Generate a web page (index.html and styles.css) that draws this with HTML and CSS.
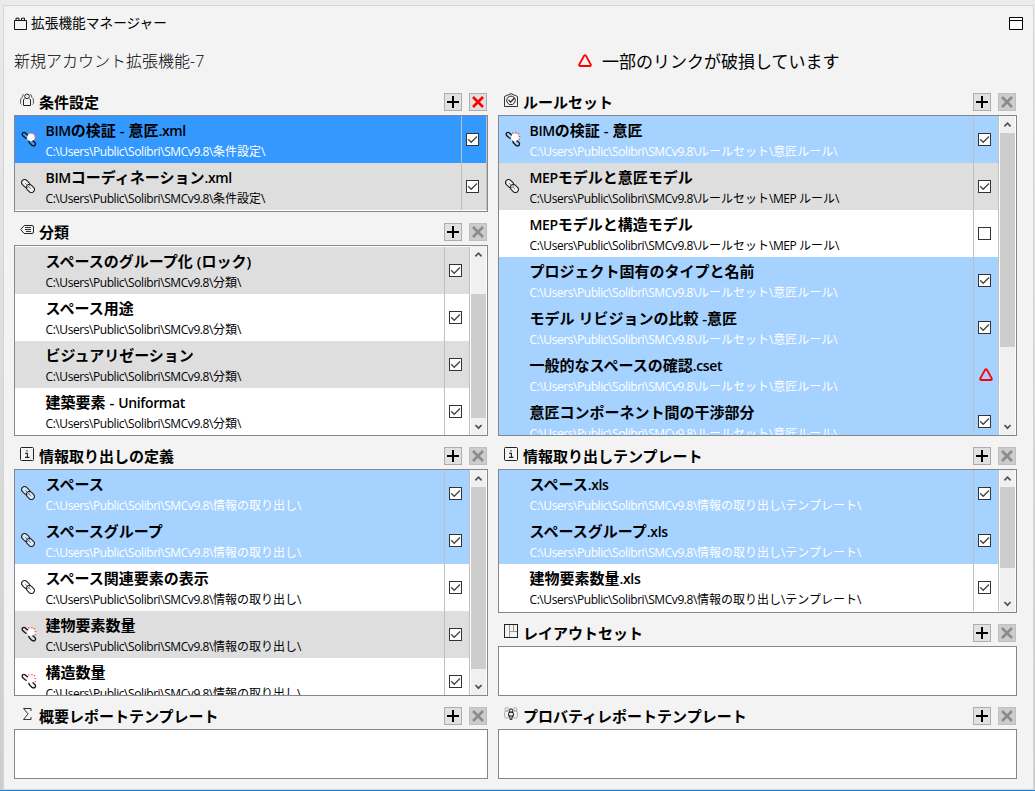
FILE: index.html
```html
<!DOCTYPE html>
<html lang="ja">
<head>
    <meta charset="UTF-8">
    <meta name="viewport" content="width=device-width, initial-scale=1.0">
    <title>拡張機能マネージャー</title>
    <link rel="stylesheet" href="styles.css">
</head>
<body>
    <!-- Shared icons -->
    <svg class="icon-defs" aria-hidden="true">
        <symbol id="plus" viewBox="0 0 16 16"><path d="M8 2v12M2 8h12" stroke="#000" stroke-width="2"/></symbol>
        <symbol id="cross" viewBox="0 0 16 16"><path d="M3 3l10 10M13 3L3 13" stroke="currentColor" stroke-width="2.6"/></symbol>
        <symbol id="check" viewBox="0 0 13 13"><rect x=".5" y=".5" width="12" height="12" fill="#fff" stroke="#333"/><path d="M2.2 6.3l3 3 5.8-5.8" fill="none" stroke="#444" stroke-width="1.3"/></symbol>
        <symbol id="box" viewBox="0 0 13 13"><rect x=".5" y=".5" width="12" height="12" fill="#fff" stroke="#333"/></symbol>
        <symbol id="warning" viewBox="0 0 14 13"><path d="M6.2 1.6Q7 .6 7.8 1.6L12.8 10.6Q13.2 12 12 12H2Q.8 12 1.2 10.6z" fill="none" stroke="#f00" stroke-width="1.8"/></symbol>
        <symbol id="link" viewBox="0 0 14 14">
            <g fill="none" stroke="#222" stroke-width="1.1" transform="rotate(45 7 7)">
                <rect x="-.8" y="4" width="8.8" height="6" rx="3" fill="#fff" fill-opacity=".5"/>
                <rect x="6" y="4" width="8.8" height="6" rx="3" fill="#fff" fill-opacity=".5"/>
                <path d="M3 7h3M8 7h3" stroke="#666" stroke-width=".8"/>
            </g>
        </symbol>
        <symbol id="broken" viewBox="0 0 16 16">
            <circle cx="10" cy="6.4" r="3.8" fill="#fff"/>
            <path d="M7.8 1v1.8M11 .8v1.8M14 2.2l-1.2 1.2M15.4 5.5h-1.8M15 9l-1.4-.8" stroke="#ff5a5a" stroke-width="1.1"/>
            <g fill="none" stroke="#111" stroke-width="1.3">
                <path d="M5.8 7.4L4.4 7 1.6 4.6Q.6 2.8 1.8 1.8 3.2.9 4.4 2L6.8 4.2"/>
                <path d="M8 9.8Q7.6 11 8.6 12l2.4 2.4q1.6 1 2.8.2 1.2-1.2.4-2.8L11.6 9.4"/>
            </g>
        </symbol>
        <symbol id="info" viewBox="0 0 14 14"><rect x=".5" y=".5" width="13" height="13" rx="1" fill="none" stroke="#222"/><path d="M7 3v1.4M5.2 6.4H7.4V10M5 10.4h4.4" fill="none" stroke="#222" stroke-width="1.1"/></symbol>
        <symbol id="up" viewBox="0 0 17 17"><path d="M5 10.6l3.5-3.6 3.5 3.6" fill="none" stroke="#505050" stroke-width="1.9"/></symbol>
        <symbol id="down" viewBox="0 0 17 17"><path d="M5 6.8l3.5 3.6L12 6.8" fill="none" stroke="#505050" stroke-width="1.9"/></symbol>
    </svg>

    <div class="window">
        <div class="titlebar">
            <svg class="title-icon" viewBox="0 0 13 13"><path d="M.5 3.5h12v9H.5zM2 3.5V1.2h3v2.3M7.5 3.5V1.2h3v2.3" fill="none" stroke="#111"/></svg>
            <span class="window-title">拡張機能マネージャー</span>
            <svg class="maximize" viewBox="0 0 14 13"><path d="M.5.5h13v12H.5z" fill="#fff" stroke="#000"/><path d="M0 3.5h14" stroke="#000"/></svg>
        </div>
        <div class="summary">
            <span class="account">新規アカウント拡張機能-7</span>
            <span class="alert"><svg class="warning"><use href="#warning"/></svg>一部のリンクが破損しています</span>
        </div>

        <div class="columns">
            <div class="column left">
                <div class="header first">
                    <svg class="header-icon" viewBox="0 0 14 14"><g fill="none" stroke="#222"><circle cx="7" cy="3.3" r="2.3"/><path d="M4.5 5.5L3.5 7v5.5h7V7l-1-1.5"/><path d="M4 1.5Q2 1.6 2.2 4.4L.6 6v4.5l1 1M10 1.5q2 .1 1.8 2.9L13.4 6v4.5l-1 1" stroke="#555"/></g></svg>
                    <h2>条件設定</h2>
                    <button class="tool"><svg><use href="#plus"/></svg></button>
                    <button class="tool remove"><svg><use href="#cross"/></svg></button>
                </div>
                <div class="list roles">
                    <div class="rows">
                        <div class="row selected"><svg class="broken"><use href="#broken"/></svg><div class="text"><b><i>BIM</i>の検証 - 意匠<i>.xml</i></b><p><i>C:\Users\Public\Solibri\SMCv9.8\</i>条件設定\</p></div><div class="state"><svg><use href="#check"/></svg></div></div>
                        <div class="row gray"><svg class="link"><use href="#link"/></svg><div class="text"><b><i>BIM</i>コーディネーション<i>.xml</i></b><p><i>C:\Users\Public\Solibri\SMCv9.8\</i>条件設定\</p></div><div class="state"><svg><use href="#check"/></svg></div></div>
                    </div>
                </div>

                <div class="header">
                    <svg class="header-icon" viewBox="0 0 14 14"><path d="M4.2 2.5H12q1.5 0 1.5 1.5v5q0 1.5-1.5 1.5H4.2L.7 6.5z" fill="none" stroke="#222"/><path d="M5 4.5h6M5 6.5h6M6 8.5h5" stroke="#333"/></svg>
                    <h2>分類</h2>
                    <button class="tool"><svg><use href="#plus"/></svg></button>
                    <button class="tool disabled"><svg><use href="#cross"/></svg></button>
                </div>
                <div class="list classes">
                    <div class="rows">
                        <div class="row gray"><div class="text"><b>スペースのグループ化 (ロック)</b><p><i>C:\Users\Public\Solibri\SMCv9.8\</i>分類\</p></div><div class="state"><svg><use href="#check"/></svg></div></div>
                        <div class="row"><div class="text"><b>スペース用途</b><p><i>C:\Users\Public\Solibri\SMCv9.8\</i>分類\</p></div><div class="state"><svg><use href="#check"/></svg></div></div>
                        <div class="row gray"><div class="text"><b>ビジュアリゼーション</b><p><i>C:\Users\Public\Solibri\SMCv9.8\</i>分類\</p></div><div class="state"><svg><use href="#check"/></svg></div></div>
                        <div class="row"><div class="text"><b>建築要素 - <i>Uniformat</i></b><p><i>C:\Users\Public\Solibri\SMCv9.8\</i>分類\</p></div><div class="state"><svg><use href="#check"/></svg></div></div>
                    </div>
                    <div class="scrollbar"><svg><use href="#up"/></svg><div class="thumb"></div><svg><use href="#down"/></svg></div>
                </div>

                <div class="header">
                    <svg class="header-icon"><use href="#info"/></svg>
                    <h2>情報取り出しの定義</h2>
                    <button class="tool"><svg><use href="#plus"/></svg></button>
                    <button class="tool disabled"><svg><use href="#cross"/></svg></button>
                </div>
                <div class="list definitions">
                    <div class="rows">
                        <div class="row light"><svg class="link"><use href="#link"/></svg><div class="text"><b>スペース</b><p><i>C:\Users\Public\Solibri\SMCv9.8\</i>情報の取り出し\</p></div><div class="state"><svg><use href="#check"/></svg></div></div>
                        <div class="row light"><svg class="link"><use href="#link"/></svg><div class="text"><b>スペースグループ</b><p><i>C:\Users\Public\Solibri\SMCv9.8\</i>情報の取り出し\</p></div><div class="state"><svg><use href="#check"/></svg></div></div>
                        <div class="row"><svg class="link"><use href="#link"/></svg><div class="text"><b>スペース関連要素の表示</b><p><i>C:\Users\Public\Solibri\SMCv9.8\</i>情報の取り出し\</p></div><div class="state"><svg><use href="#check"/></svg></div></div>
                        <div class="row gray"><svg class="broken"><use href="#broken"/></svg><div class="text"><b>建物要素数量</b><p><i>C:\Users\Public\Solibri\SMCv9.8\</i>情報の取り出し\</p></div><div class="state"><svg><use href="#check"/></svg></div></div>
                        <div class="row"><svg class="broken"><use href="#broken"/></svg><div class="text"><b>構造数量</b><p><i>C:\Users\Public\Solibri\SMCv9.8\</i>情報の取り出し\</p></div><div class="state"><svg><use href="#check"/></svg></div></div>
                    </div>
                    <div class="scrollbar"><svg><use href="#up"/></svg><div class="thumb"></div><svg><use href="#down"/></svg></div>
                </div>

                <div class="header">
                    <svg class="header-icon" viewBox="0 0 14 14"><path d="M11 4V1.5H3.5L8 6.8l-4.5 5.7H11V10" fill="none" stroke="#333"/></svg>
                    <h2>概要レポートテンプレート</h2>
                    <button class="tool"><svg><use href="#plus"/></svg></button>
                    <button class="tool disabled"><svg><use href="#cross"/></svg></button>
                </div>
                <div class="list empty"></div>
            </div>

            <div class="column right">
                <div class="header first">
                    <svg class="header-icon" viewBox="0 0 14 14"><path d="M.5 13.5v-10L7 .6l6.5 2.9v10z" fill="none" stroke="#333"/><circle cx="7" cy="7.4" r="4.3" fill="none" stroke="#222"/><path d="M4.6 7l2 2.2L10.4 5" fill="none" stroke="#222" stroke-width="1.2"/></svg>
                    <h2>ルールセット</h2>
                    <button class="tool"><svg><use href="#plus"/></svg></button>
                    <button class="tool disabled"><svg><use href="#cross"/></svg></button>
                </div>
                <div class="list rulesets">
                    <div class="rows">
                        <div class="row light"><svg class="broken"><use href="#broken"/></svg><div class="text"><b><i>BIM</i>の検証 - 意匠</b><p><i>C:\Users\Public\Solibri\SMCv9.8\</i>ルールセット\意匠ルール\</p></div><div class="state"><svg><use href="#check"/></svg></div></div>
                        <div class="row gray"><svg class="link"><use href="#link"/></svg><div class="text"><b><i>MEP</i>モデルと意匠モデル</b><p><i>C:\Users\Public\Solibri\SMCv9.8\</i>ルールセット<i>\MEP </i>ルール\</p></div><div class="state"><svg><use href="#check"/></svg></div></div>
                        <div class="row"><div class="text"><b><i>MEP</i>モデルと構造モデル</b><p><i>C:\Users\Public\Solibri\SMCv9.8\</i>ルールセット<i>\MEP </i>ルール\</p></div><div class="state"><svg><use href="#box"/></svg></div></div>
                        <div class="row light"><div class="text"><b>プロジェクト固有のタイプと名前</b><p><i>C:\Users\Public\Solibri\SMCv9.8\</i>ルールセット\意匠ルール\</p></div><div class="state"><svg><use href="#check"/></svg></div></div>
                        <div class="row light"><div class="text"><b>モデル リビジョンの比較 -意匠</b><p><i>C:\Users\Public\Solibri\SMCv9.8\</i>ルールセット\意匠ルール\</p></div><div class="state"><svg><use href="#check"/></svg></div></div>
                        <div class="row light"><div class="text"><b>一般的なスペースの確認<i>.cset</i></b><p><i>C:\Users\Public\Solibri\SMCv9.8\</i>ルールセット\意匠ルール\</p></div><div class="state"><svg class="warning"><use href="#warning"/></svg></div></div>
                        <div class="row light"><div class="text"><b>意匠コンポーネント間の干渉部分</b><p><i>C:\Users\Public\Solibri\SMCv9.8\</i>ルールセット\意匠ルール\</p></div><div class="state"><svg><use href="#check"/></svg></div></div>
                    </div>
                    <div class="scrollbar"><svg><use href="#up"/></svg><div class="thumb"></div><svg><use href="#down"/></svg></div>
                </div>

                <div class="header">
                    <svg class="header-icon"><use href="#info"/></svg>
                    <h2>情報取り出しテンプレート</h2>
                    <button class="tool"><svg><use href="#plus"/></svg></button>
                    <button class="tool disabled"><svg><use href="#cross"/></svg></button>
                </div>
                <div class="list templates">
                    <div class="rows">
                        <div class="row light"><div class="text"><b>スペース<i>.xls</i></b><p><i>C:\Users\Public\Solibri\SMCv9.8\</i>情報の取り出し\テンプレート\</p></div><div class="state"><svg><use href="#check"/></svg></div></div>
                        <div class="row light"><div class="text"><b>スペースグループ<i>.xls</i></b><p><i>C:\Users\Public\Solibri\SMCv9.8\</i>情報の取り出し\テンプレート\</p></div><div class="state"><svg><use href="#check"/></svg></div></div>
                        <div class="row"><div class="text"><b>建物要素数量<i>.xls</i></b><p><i>C:\Users\Public\Solibri\SMCv9.8\</i>情報の取り出し\テンプレート\</p></div><div class="state"><svg><use href="#check"/></svg></div></div>
                    </div>
                    <div class="scrollbar"><svg><use href="#up"/></svg><div class="thumb"></div><svg><use href="#down"/></svg></div>
                </div>

                <div class="header">
                    <svg class="header-icon" viewBox="0 0 14 14"><path d="M5.5 1v12M9.5 1v6M5.5 7.5H13" fill="none" stroke="#999"/><rect x=".5" y=".5" width="13" height="13" fill="none" stroke="#222"/></svg>
                    <h2>レイアウトセット</h2>
                    <button class="tool"><svg><use href="#plus"/></svg></button>
                    <button class="tool disabled"><svg><use href="#cross"/></svg></button>
                </div>
                <div class="list empty"></div>

                <div class="header">
                    <svg class="header-icon" viewBox="0 0 14 14"><g fill="none" stroke="#aaa"><circle cx="2.6" cy="2.2" r="1.7"/><circle cx="11.4" cy="2.2" r="1.7"/><rect x=".6" y="4" width="4" height="7" rx="1.5"/><rect x="9.4" y="4" width="4" height="7" rx="1.5"/></g><g fill="#f3f3f3" stroke="#111"><circle cx="7" cy="3.6" r="1.7"/><rect x="4.6" y="5.3" width="4.8" height="4.4" rx="1.5"/><path d="M6 8v4.3h2V8"/></g></svg>
                    <h2>プロバティレポートテンプレート</h2>
                    <button class="tool"><svg><use href="#plus"/></svg></button>
                    <button class="tool disabled"><svg><use href="#cross"/></svg></button>
                </div>
                <div class="list empty"></div>
            </div>
        </div>
    </div>
</body>
</html>
```
FILE: styles.css
```css
* {
    box-sizing: border-box;
}

body {
    font-family: "Open Sans", "Noto Sans CJK JP", sans-serif;
    margin: 0;
    height: 791px;
    padding: 5px 1px 0 3px;
    overflow: hidden;
    color: #000;
    background: linear-gradient(#ebebeb, #cdcdcd);
    border-bottom: 1px solid #1883d7;
}

.icon-defs {
    display: none;
}

svg {
    display: block;
    flex: none;
}

.window {
    height: 785px;
    padding: 0 16px 0 10px;
    background-color: #f3f3f3;
    border: 1px solid #d5d5d5;
}

.titlebar {
    display: flex;
    align-items: center;
    height: 34px;
}

.title-icon {
    width: 13px;
    height: 13px;
}

.window-title {
    flex: 1;
    margin-left: 4px;
    padding-bottom: 2px;
    font-size: 13.7px;
}

.maximize {
    width: 14px;
    height: 13px;
    margin-right: -6px;
}

.summary {
    display: flex;
    align-items: center;
    height: 42px;
    padding-bottom: 2px;
    font-size: 16px;
}

.account {
    width: 564px;
    font-weight: 300;
}

.alert {
    display: flex;
    align-items: center;
    gap: 10px;
    font-size: 17px;
}

.warning {
    width: 14px;
    height: 13px;
}

.columns {
    display: flex;
    gap: 10px;
}

.left {
    width: 474px;
}

.right {
    width: 519px;
}

.header {
    display: flex;
    align-items: flex-end;
    height: 33px;
    padding: 0 1px 4px 6px;
}

.header-icon {
    width: 14px;
    height: 14px;
    margin-bottom: 4px;
}

h2 {
    flex: 1;
    margin: 0 0 0 5px;
    font-size: 15px;
    font-weight: 700;
    line-height: 18px;
}

.tool {
    display: flex;
    width: 18px;
    height: 18px;
    margin-left: 7px;
    padding: 0;
    background-color: #e1e1e1;
    border: 1px solid #adadad;
}

.tool svg {
    width: 16px;
    height: 16px;
}

.remove {
    color: #f00;
}

.disabled {
    color: #8b8b8b;
    background-color: #ccc;
    border-color: #bfbfbf;
}

.list {
    display: flex;
    overflow: hidden;
    background-color: #fff;
    border: 1px solid #828790;
}

.roles { height: 97px; }
.classes { height: 191px; }
.definitions { height: 227px; }
.rulesets { height: 321px; }
.templates { height: 144px; }
.empty { height: 50px; }

.classes .rows {
    padding-top: 1px;
}

.rows {
    flex: 1;
}

.row {
    display: flex;
    height: 47px;
    padding-left: 6px;
    background-color: #fff;
}

.gray {
    background-color: #dedede;
}

.light {
    background-color: #a6d2ff;
}

.selected {
    background-color: #39f;
}

.link {
    width: 14px;
    height: 14px;
    margin: 16px -14px 0 0;
}

.broken {
    width: 16px;
    height: 16px;
    margin: 15px -16px 0 0;
}

.text {
    flex: 1;
    padding-left: 24.5px;
    white-space: nowrap;
}

.text b {
    display: block;
    height: 27px;
    font-size: 15px;
    font-weight: 600;
    line-height: 28px;
}

.text p {
    margin: 0;
    font-size: 12px;
    line-height: 18px;
}

/* Latin parts run tighter than the Japanese text */
.text i {
    font-style: normal;
    letter-spacing: -0.43px;
}

.text b i {
    font-size: 14px;
    letter-spacing: -0.35px;
}

.selected p, .light p {
    color: #fff;
}

.state {
    width: 26px;
    padding: 17px 0 0 4px;
    border: solid #bfbfbf;
    border-width: 0 1px;
}

.state svg {
    width: 13px;
    height: 13px;
}

.state .warning {
    width: 14px;
    margin-left: 1px;
}

.scrollbar {
    display: flex;
    flex-direction: column;
    width: 17px;
    background-color: #f0f0f0;
    border: solid #fff;
    border-width: 0 1px;
}

.scrollbar svg {
    width: 15px;
    height: 17px;
}

.scrollbar svg:last-child {
    margin-top: auto;
}

.thumb {
    background-color: #cdcdcd;
}

.classes .thumb { height: 124px; margin-top: 31px; }
.definitions .thumb { height: 182px; }
.rulesets .thumb { height: 214px; }
.templates .thumb { height: 81px; }
```
